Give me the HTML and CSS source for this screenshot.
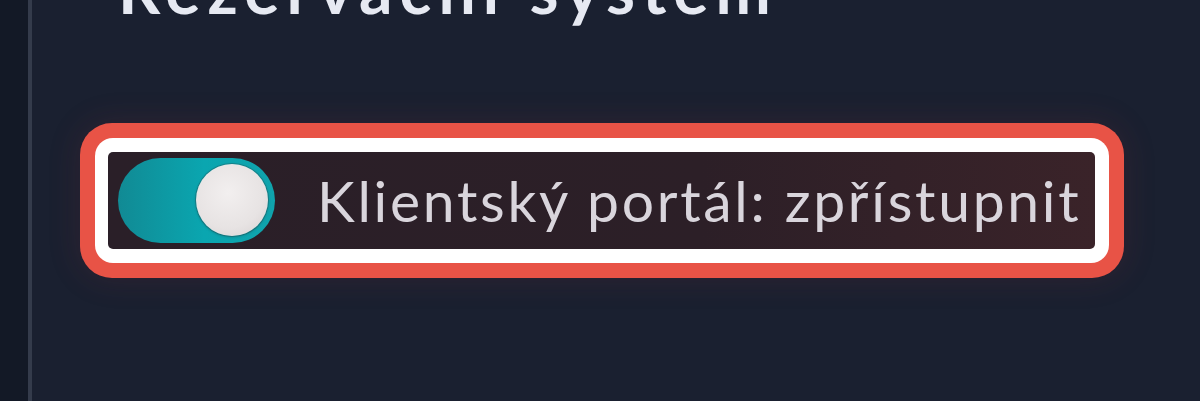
FILE: index.html
```html
<!DOCTYPE html>
<html lang="cs">
<head>
<meta charset="utf-8">
<title>Rezervační systém</title>
<link rel="stylesheet" href="styles.css">
</head>
<body>
<div class="app">
  <aside class="rail"></aside>
  <main class="panel">
    <h1 class="title">Rezervační systém</h1>
    <div class="field">
      <div class="ring-red">
        <div class="ring-white">
          <label class="toggle-row">
            <span class="switch"><span class="knob"></span></span>
            <span class="label">Klientský portál: zpřístupnit</span>
          </label>
        </div>
      </div>
    </div>
  </main>
</div>
</body>
</html>
```
FILE: styles.css
```css
html, body {
  margin: 0;
  padding: 0;
  height: 100%;
  background: #1a2030;
  overflow: hidden;
}
.app {
  display: flex;
  height: 401px;
  font-family: "Lato", "Inter", sans-serif;
}
.rail {
  width: 28px;
  flex: none;
  background: #131926;
  border-right: 4px solid #343b4b;
}
.panel {
  flex: 1;
  background: #1a2030;
  padding-left: 48px;
}
.title {
  margin: -44px 0 0 0;
  padding-left: 38px;
  font-size: 66px;
  line-height: 66px;
  font-weight: 700;
  color: #e6e9f2;
  letter-spacing: 7px;
  white-space: nowrap;
}
.field {
  margin-top: 101px;
}
.ring-red {
  display: inline-block;
  padding: 15px;
  border-radius: 32px;
  background: #e85346;
  box-shadow: 0 0 30px 4px rgba(150, 50, 60, 0.14);
}
.ring-white {
  padding: 14px 14px 14px 13px;
  border-radius: 18px;
  background: #ffffff;
}
.toggle-row {
  display: flex;
  align-items: center;
  gap: 42px;
  height: 97px;
  box-sizing: border-box;
  padding: 0 14px 0 10px;
  border-radius: 5px;
  background: linear-gradient(90deg, #2a1f28 0%, #2c1f27 60%, #3a2329 100%);
}
.switch {
  position: relative;
  width: 157px;
  height: 85px;
  border-radius: 43px;
  background: linear-gradient(90deg, #118a94 0%, #0aa6b0 55%, #10a3ac 100%);
  flex: none;
}
.knob {
  position: absolute;
  right: 7px;
  top: 6px;
  width: 72px;
  height: 72px;
  border-radius: 50%;
  background: radial-gradient(circle at 45% 40%, #f2efef 0%, #e7e3e3 60%, #d6d0d1 100%);
  box-shadow: 0 0 0 1px rgba(60, 40, 45, 0.25), 0 1px 3px rgba(0, 0, 0, 0.25);
}
.label {
  font-size: 57px;
  line-height: 1;
  color: #d9d5dc;
  letter-spacing: 2.7px;
  white-space: nowrap;
}
```
